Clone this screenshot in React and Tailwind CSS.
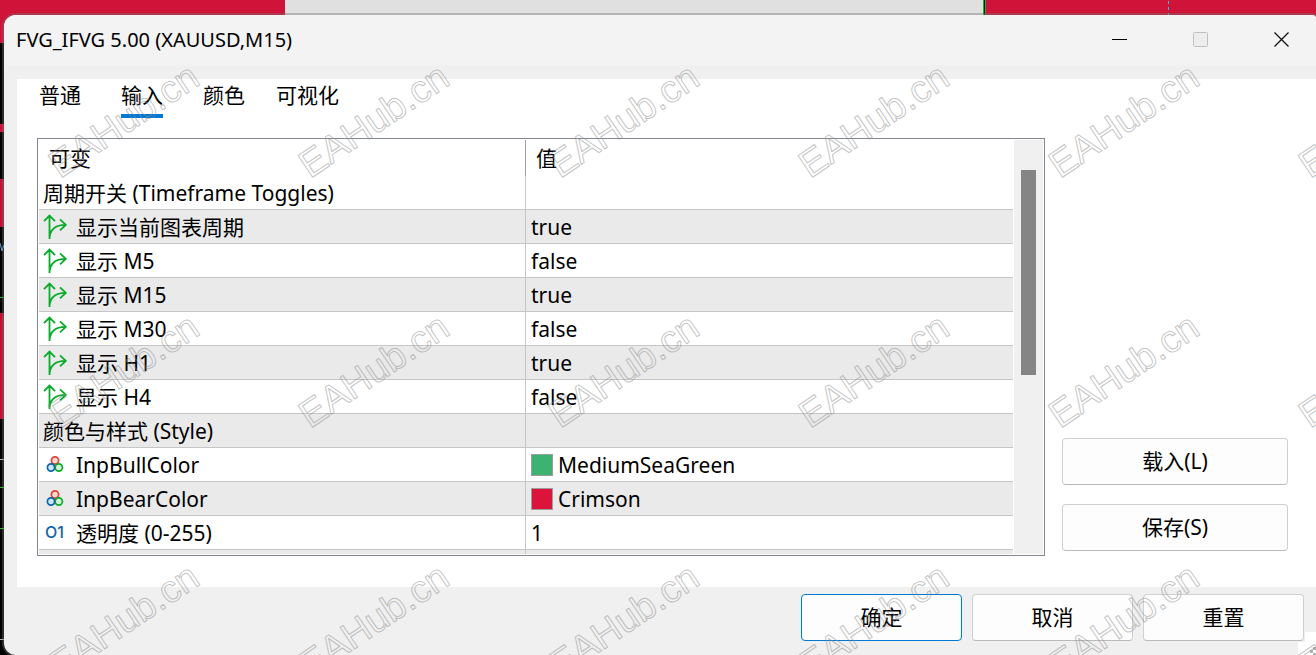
const params = [
  { name: '周期开关 (Timeframe Toggles)' },
  { icon: 'bool', name: '显示当前图表周期', value: 'true' },
  { icon: 'bool', name: '显示 M5', value: 'false' },
  { icon: 'bool', name: '显示 M15', value: 'true' },
  { icon: 'bool', name: '显示 M30', value: 'false' },
  { icon: 'bool', name: '显示 H1', value: 'true' },
  { icon: 'bool', name: '显示 H4', value: 'false' },
  { name: '颜色与样式 (Style)' },
  { icon: 'color', name: 'InpBullColor', value: 'MediumSeaGreen', swatch: 'bg-[#3cb371]' },
  { icon: 'color', name: 'InpBearColor', value: 'Crimson', swatch: 'bg-[#dc143c]' },
  { icon: 'int', name: '透明度 (0-255)', value: '1' },
  { name: '' },
];

const tabs = ['普通', '输入', '颜色', '可视化'];

const watermarkCols = [0, 250, 500, 750, 1000, 1250];
const watermarkRows = [0, 250, 500];

function BoolIcon() {
  return (
    <svg width="24" height="26" viewBox="0 0 24 26" fill="none" stroke="#0aab2a" strokeWidth="1.8" aria-hidden="true">
      <path d="M6.500 25V2M1 7.200l5.500-5.600L12 7.200M6.500 24.500C6.900 16 12 10.800 22.500 10.800M17 5.300l5.800 5.500-5.800 5.500" />
    </svg>
  );
}

function ColorIcon() {
  return (
    <svg width="24" height="24" viewBox="0 0 24 24" strokeWidth="1.7" aria-hidden="true">
      <circle cx="12" cy="7.500" r="3.600" fill="#ffd9d2" stroke="#dc4238" />
      <circle cx="15.800" cy="14.500" r="3.600" fill="#d5f5d8" stroke="#0aab2a" />
      <circle cx="8" cy="14.500" r="3.600" fill="#c9e6fb" stroke="#0f62a8" />
    </svg>
  );
}

function ParamIcon({ type }) {
  if (type === 'bool') return <BoolIcon />;
  if (type === 'color') return <ColorIcon />;
  return <span className="w-6 pb-0.5 pl-0.5 font-['Inter'] text-base font-medium leading-6 text-[#1065a8]">O1</span>;
}

function DialogButton({ children, primary, className = '' }) {
  return (
    <button
      type="button"
      className={`h-[47px] rounded border bg-[#fdfdfd] pb-px text-center ${primary ? 'border-[#0078d4]' : 'border-[#d0d0d0] border-b-[#bababa]'} ${className}`}
    >
      {children}
    </button>
  );
}

function ChartBackdrop() {
  return (
    <svg className="absolute inset-0 h-full w-full" aria-hidden="true">
      <rect width="100%" height="100%" fill="#000" />
      <rect width="100%" height="43" fill="#d01338" />
      <rect x="285" width="698" height="15" fill="#e0e0e0" />
      <rect x="983" width="3" height="15" fill="#1fae2c" />
      <rect x="984" width="1" height="15" fill="#111" />
      <path d="M1168.500 1v14" stroke="#3fb5e0" strokeDasharray="3 3" />
      <rect y="124" width="4" height="8" fill="#d01338" />
      <rect y="179" width="4" height="48" fill="#c01233" />
      <rect y="313" width="4" height="106" fill="#c01233" />
      <path d="M0 243l2 8 2-6" stroke="#6fa8dc" fill="none" />
      <path d="M0 297.500h4M0 487.500h4M0 528.500h4" stroke="#18c018" />
      <path d="M0 459.500h4M0 639.500h4" stroke="#bbb" />
    </svg>
  );
}

function Watermark() {
  return (
    <svg className="pointer-events-none absolute inset-0 h-full w-full" aria-hidden="true">
      <g fill="none" stroke="#8a8a8a" strokeOpacity=".5" strokeLinejoin="round" fontFamily="Liberation Sans, sans-serif" fontSize="38">
        {watermarkRows.map((y) =>
          watermarkCols.map((x) => (
            <text key={`${x}-${y}`} transform={`translate(${x + 60} ${y + 179}) rotate(-34)`}>
              EAHub.cn
            </text>
          ))
        )}
      </g>
    </svg>
  );
}

function TitleBar() {
  return (
    <header className="flex h-[50px] shrink-0 items-center justify-between bg-[#f3f3f3] pl-3 pr-[23px]">
      <h1 className="text-xl">FVG_IFVG 5.00 (XAUUSD,M15)</h1>
      <div className="flex gap-[57px] pb-0.5">
        <button type="button" aria-label="最小化" className="flex size-6 items-center justify-center">
          <svg width="15" height="15" stroke="#000"><path d="M0 7.500h15" /></svg>
        </button>
        <button type="button" aria-label="最大化" disabled className="flex size-6 items-center justify-center">
          <svg width="15" height="15" stroke="#c0c0c0" fill="#ededed"><rect x=".5" y=".5" width="14" height="14" rx="1" /></svg>
        </button>
        <button type="button" aria-label="关闭" className="flex size-6 items-center justify-center">
          <svg width="15" height="15" stroke="#111" strokeWidth="1.300"><path d="M.5.5l14 14M14.500.5l-14 14" /></svg>
        </button>
      </div>
    </header>
  );
}

function ParamTable() {
  return (
    <div className="flex min-w-0 flex-1 overflow-hidden border border-[#828790] bg-white p-px">
      <div className="min-w-0 flex-1 overflow-hidden pr-px">
        <table className="w-full table-fixed border-separate border-spacing-0 text-left">
          <thead>
            <tr className="h-9">
              <th className="w-1/2 border-r border-[#a0a0a0] py-0 pl-2.5 font-normal">可变</th>
              <th className="py-0 pl-2.5 font-normal">值</th>
            </tr>
          </thead>
          <tbody>
            {params.map((p, i) => (
              <tr key={i} className={`h-[34px] ${i % 2 ? 'bg-[#eaeaea]' : 'bg-white'}`}>
                <td className="border-b border-r border-[#c6c6c6] py-0 pl-1">
                  <div className="flex items-center gap-[9px]">
                    {p.icon && <ParamIcon type={p.icon} />}
                    <span>{p.name}</span>
                  </div>
                </td>
                <td className="border-b border-[#c6c6c6] py-0 pl-[5px]">
                  <div className="flex items-center gap-[5px]">
                    {p.swatch && <span className={`size-[22px] border border-[#9c9c9c] ${p.swatch}`} />}
                    <span>{p.value}</span>
                  </div>
                </td>
              </tr>
            ))}
          </tbody>
        </table>
      </div>
      <div className="w-[29px] shrink-0 bg-[#f0f0f0] pl-[7px] pt-[30px]">
        <div className="h-[205px] w-[15px] bg-[#858585]" />
      </div>
    </div>
  );
}

export default function App() {
  return (
    <div className="relative flex h-screen min-h-[480px] flex-col overflow-hidden pl-1 pt-[15px] font-['Noto_Sans','Noto_Sans_CJK_SC',sans-serif] text-[21px] leading-7 text-black">
      <ChartBackdrop />

      <div className="relative flex min-h-0 flex-1 flex-col overflow-hidden rounded-l-xl rounded-tr bg-[#f0f0f0] shadow-[0_0_0_2px_rgba(112,112,112,0.4)]">
        <TitleBar />

        <main className="ml-[13px] mt-3.5 flex min-h-0 flex-1 flex-col bg-white pb-[31px]">
          <div role="tablist" className="flex h-[39px] shrink-0 pl-0.5">
            {tabs.map((tab) => (
              <button key={tab} type="button" role="tab" aria-selected={tab === '输入'} className="flex min-w-[82px] justify-center px-[11px]">
                <span className={`h-[39px] border-b-4 pt-0.5 ${tab === '输入' ? 'border-[#0078d7]' : 'border-transparent'}`}>{tab}</span>
              </button>
            ))}
          </div>

          <div className="mt-5 flex min-h-0 flex-1 gap-[17px] pl-5 pr-7">
            <ParamTable />
            <div className="flex w-[226px] shrink-0 flex-col justify-end gap-[19px] pb-[5px]">
              <DialogButton>载入(L)</DialogButton>
              <DialogButton>保存(S)</DialogButton>
            </div>
          </div>
        </main>

        <footer className="flex h-[68px] shrink-0 justify-end gap-2.5 pr-3 pt-[7px]">
          <DialogButton primary className="w-[161px]">确定</DialogButton>
          <DialogButton className="w-[161px]">取消</DialogButton>
          <DialogButton className="w-[161px]">重置</DialogButton>
        </footer>

        <svg className="absolute bottom-0 right-0" width="18" height="23" aria-hidden="true">
          <path d="M7 0h11v23H0V10h7z" fill="#fff" />
          <path d="M15 15h3v3h-3zM12 18h3v3h-3zM15 21h3v2h-3z" fill="#b4b4b4" />
        </svg>
      </div>

      <Watermark />
    </div>
  );
}
